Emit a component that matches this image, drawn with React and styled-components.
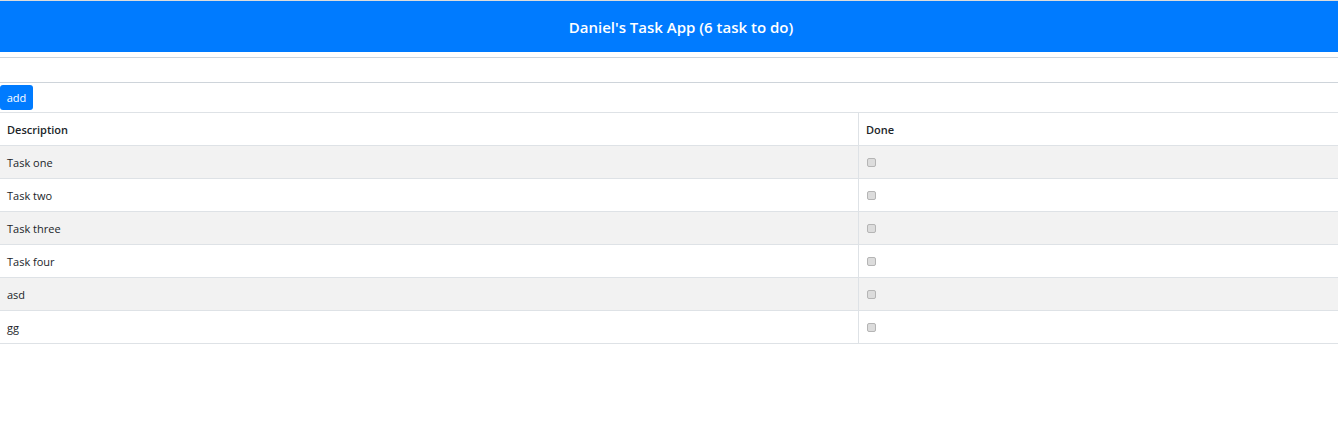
import React from "react";
import styled, { createGlobalStyle } from "styled-components";

const GlobalStyle = createGlobalStyle`
  body{
    margin:0;
    font-family:"Open Sans","Noto Sans",sans-serif;
    background:#fff;
    color:#212529;
  }
`;

const Header = styled.header`
  border-top:1px solid #dcdcdc;
  background:#007bff;
  height:51px;
  display:flex;
  align-items:center;
  justify-content:center;
  padding-left:24px;
  color:#fff;
  font-size:15px;
  font-weight:600;
`;

const Form = styled.div`
  margin-top:5px;
  display:flex;
  flex-direction:column;
  align-items:flex-start;
`;

const Input = styled.input`
  box-sizing:border-box;
  width:100%;
  height:26px;
  border:none;
  border-top:1px solid #ced4da;
  border-bottom:1px solid #ced4da;
  outline:none;
  margin:0;
`;

const Button = styled.button`
  margin-top:2px;
  background:#007bff;
  color:#fff;
  border:none;
  border-radius:3px;
  font-family:inherit;
  font-size:11px;
  height:25px;
  width:33px;
  padding:0;
`;

const Table = styled.table`
  margin-top:2px;
  width:100%;
  border-collapse:collapse;
  font-size:11px;
`;

const Row = styled.tr`
  background:${props => (props.$striped ? "#f2f2f2" : "#fff")};
`;

const Cell = styled.td`
  height:32px;
  padding:0 8px 0 7px;
  border-top:1px solid #dee2e6;
  border-bottom:1px solid #dee2e6;
  text-align:left;
  font-weight:${props => (props.$head ? 600 : 400)};
  &:first-child{
    width:843px;
    border-right:1px solid #dee2e6;
  }
`;

const Box = styled.span`
  display:block;
  width:7px;
  height:7px;
  border:1px solid #b5b5b5;
  border-radius:2px;
  background:#dcdcdc;
  margin-left:1px;
`;

const tasks = ["Task one", "Task two", "Task three", "Task four", "asd", "gg"];

function App() {
  return (
    <>
      <GlobalStyle />
      <Header>Daniel's Task App ({tasks.length} task to do)</Header>
      <Form>
        <Input type="text" />
        <Button>add</Button>
      </Form>
      <Table>
        <thead>
          <Row>
            <Cell as="th" $head>Description</Cell>
            <Cell as="th" $head>Done</Cell>
          </Row>
        </thead>
        <tbody>
          {tasks.map((t, i) => (
            <Row key={t} $striped={i % 2 === 0}>
              <Cell>{t}</Cell>
              <Cell><Box /></Cell>
            </Row>
          ))}
        </tbody>
      </Table>
    </>
  );
}

export default App;
